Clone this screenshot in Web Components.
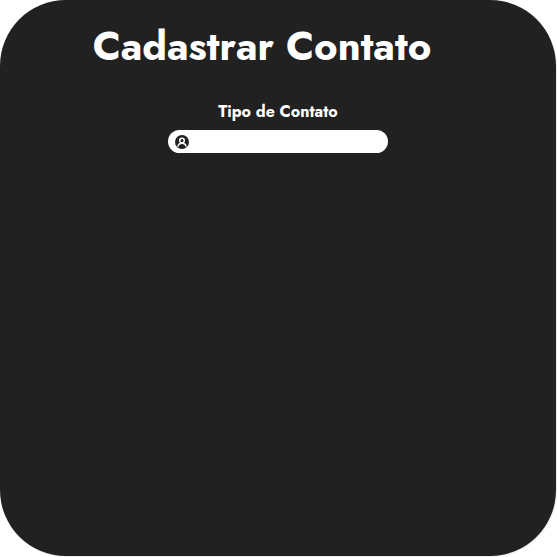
<!DOCTYPE html>
<html lang="pt-BR">
<head>
<meta charset="utf-8">
<meta name="viewport" content="width=device-width, initial-scale=1">
<title>Cadastrar Contato</title>
<style>
  body { margin: 0; background: #fff; font-family: Jost, Lato, sans-serif; color: #fff; }
</style>
</head>
<body>
<contact-card>
  <span slot="title">Cadastrar Contato</span>
  <contact-field label="Tipo de Contato"><user-icon slot="icon"></user-icon></contact-field>
</contact-card>
<script>
  class ContactCard extends HTMLElement {
    constructor() {
      super();
      this.attachShadow({ mode: 'open' }).innerHTML = `
        <style>
          :host { display: flex; box-sizing: border-box; min-height: 100vh; padding: 0 1px 1px 0; }
          main { flex: 1; box-sizing: border-box; padding: 20px 0; border-radius: 66px; background: #212121; box-shadow: 1px 1px 0 #eee; display: flex; flex-direction: column; align-items: center; gap: 30px; }
          h1 { margin: 0; padding-right: 32px; font-size: 40px; line-height: 52px; font-weight: 700; }
        </style>
        <main><h1><slot name="title"></slot></h1><slot></slot></main>`;
    }
  }

  class ContactField extends HTMLElement {
    constructor() {
      super();
      this.attachShadow({ mode: 'open' }).innerHTML = `
        <style>
          :host { display: flex; flex-direction: column; align-items: center; gap: 8px; }
          label { font-size: 16px; line-height: 20px; font-weight: 700; }
          .box { display: flex; align-items: center; gap: 6px; box-sizing: border-box; width: 220px; height: 23px; padding: 0 12px 0 7px; border-radius: 12px; background: #fff; }
          input { flex: 1; min-width: 0; border: 0; padding: 0; outline: 0; background: transparent; color: #212121; font: inherit; font-size: 14px; }
        </style>
        <label for="value"></label>
        <div class="box"><slot name="icon"></slot><input id="value" type="text"></div>`;
    }
    connectedCallback() {
      this.shadowRoot.querySelector('label').textContent = this.getAttribute('label');
    }
  }

  class UserIcon extends HTMLElement {
    constructor() {
      super();
      this.attachShadow({ mode: 'open' }).innerHTML = `
        <style>:host { display: flex; } svg { display: block; }</style>
        <svg width="14" height="14" viewBox="0 0 14 14" aria-hidden="true">
          <circle cx="7" cy="7" r="7" fill="#212121"/>
          <circle cx="7" cy="5.600" r="2.300" fill="none" stroke="#fff" stroke-width="1.500"/>
          <path d="M2.800 11.600C3.300 9.300 4.800 8.300 7 8.300s3.700 1 4.200 3.300" fill="none" stroke="#fff" stroke-width="1.500"/>
        </svg>`;
    }
  }

  customElements.define('user-icon', UserIcon);
  customElements.define('contact-field', ContactField);
  customElements.define('contact-card', ContactCard);
</script>
</body>
</html>
